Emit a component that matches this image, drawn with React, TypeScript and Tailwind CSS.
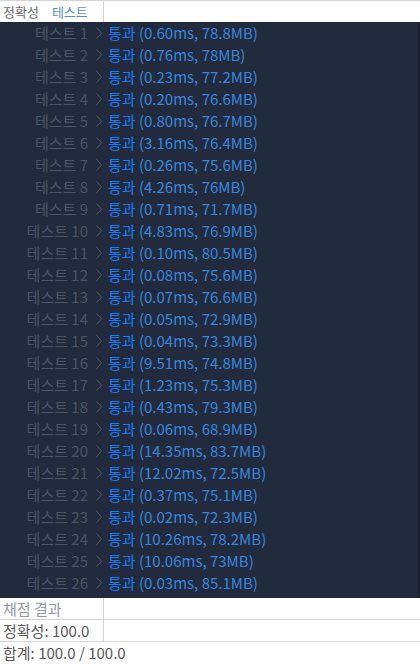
const results: [string, string][] = [
  ['0.60ms', '78.8MB'],
  ['0.76ms', '78MB'],
  ['0.23ms', '77.2MB'],
  ['0.20ms', '76.6MB'],
  ['0.80ms', '76.7MB'],
  ['3.16ms', '76.4MB'],
  ['0.26ms', '75.6MB'],
  ['4.26ms', '76MB'],
  ['0.71ms', '71.7MB'],
  ['4.83ms', '76.9MB'],
  ['0.10ms', '80.5MB'],
  ['0.08ms', '75.6MB'],
  ['0.07ms', '76.6MB'],
  ['0.05ms', '72.9MB'],
  ['0.04ms', '73.3MB'],
  ['9.51ms', '74.8MB'],
  ['1.23ms', '75.3MB'],
  ['0.43ms', '79.3MB'],
  ['0.06ms', '68.9MB'],
  ['14.35ms', '83.7MB'],
  ['12.02ms', '72.5MB'],
  ['0.37ms', '75.1MB'],
  ['0.02ms', '72.3MB'],
  ['10.26ms', '78.2MB'],
  ['10.06ms', '73MB'],
  ['0.03ms', '85.1MB'],
]

// thin ">" between label and result
function Chevron() {
  return (
    <svg width="6" height="14" viewBox="0 0 6 14" fill="none" className="ml-[8px] mr-[6px] shrink-0">
      <path d="M0.5 1.5l5 5.5-5 5.5" stroke="#4f586b" strokeWidth="1" />
    </svg>
  )
}

export default function App() {
  return (
    <div
      className="w-[420px] h-[664px] bg-white text-[15px] leading-[22px] overflow-hidden"
      style={{ fontFamily: '"Noto Sans CJK KR", "Noto Sans", sans-serif' }}
    >
      {/* header row */}
      <div className="flex h-[22px] border-t border-[#d4d4d4]">
        <div className="w-[104px] border-r border-[#d4d4d4] pl-[3px] text-[13px] leading-[21px] flex gap-[13px]">
          <span className="text-[#6d6d6d]">정확성</span>
          <span className="text-[#5d8ec6]">테스트</span>
        </div>
      </div>

      {/* results panel */}
      <div className="h-[576px] bg-[#212b3d] border-r-2 border-[#1a2130]">
        {results.map(([time, mem], i) => (
          <div key={i} className="flex items-center h-[22px]">
            <div className="w-[88px] text-right text-[#4b5365] whitespace-nowrap">테스트 {i + 1}</div>
            <Chevron />
            <div className="whitespace-nowrap">
              <span className="text-[#1a7cf5]">통과</span>
              <span className="text-[#3a86de]"> ({time}, {mem})</span>
            </div>
          </div>
        ))}
      </div>

      {/* summary */}
      <div className="flex h-[22px] border-b border-[#d4d4d4]">
        <div className="w-[104px] border-r border-[#d4d4d4] pl-[3px] text-[#8f9aab]">채점 결과</div>
      </div>
      <div className="flex h-[22px] border-b border-[#d4d4d4]">
        <div className="w-[104px] border-r border-[#d4d4d4] pl-[3px] text-[#595959] whitespace-nowrap">정확성: 100.0</div>
      </div>
      <div className="h-[22px] pl-[3px] text-[#595959]">합계: 100.0 / 100.0</div>
    </div>
  )
}
